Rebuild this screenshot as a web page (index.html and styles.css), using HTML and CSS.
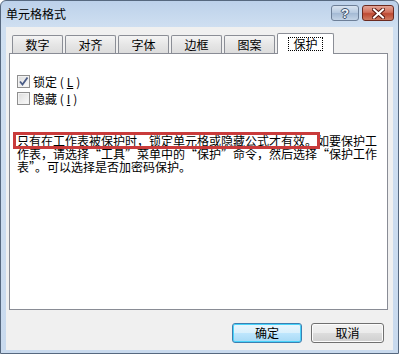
FILE: index.html
```html
<!DOCTYPE html>
<html lang="zh-CN">
<head>
<meta charset="utf-8">
<link rel="stylesheet" href="styles.css">
</head>
<body>
<div class="window">
  <div class="titlebar">
    <span class="title">单元格格式</span>
    <div class="caption-btns">
      <div class="cap help">?</div>
      <div class="cap close">
        <svg width="13" height="11" viewBox="0 0 13 11"><path d="M2 1.5 L11 9.5 M11 1.5 L2 9.5" stroke="#5a1a12" stroke-width="4" stroke-linecap="square"/><path d="M2 1.5 L11 9.5 M11 1.5 L2 9.5" stroke="#ffffff" stroke-width="2" stroke-linecap="square"/></svg>
      </div>
    </div>
  </div>
  <div class="body">
    <div class="tabs">
      <div class="tab">数字</div>
      <div class="tab">对齐</div>
      <div class="tab">字体</div>
      <div class="tab">边框</div>
      <div class="tab">图案</div>
      <div class="tab active"><span class="focus">保护</span></div>
    </div>
    <div class="panel">
      <div class="check"><span class="box"><svg width="11" height="11" viewBox="0 0 11 11"><path d="M2 5.5 L4.5 8.5 L9.5 1.5" fill="none" stroke="#4a5c86" stroke-width="1.8"/></svg></span>锁定 (<u>L</u>)</div>
      <div class="check"><span class="box"></span>隐藏 (<u>I</u>)</div>
      <p class="desc"><span class="hl">只有在工作表被保护时，锁定单元格或隐藏公式才有效。</span>如要保护工作表，请选择“工具”菜单中的“保护”命令，然后选择“保护工作表”。可以选择是否加密码保护。</p>
    </div>
    <div class="actions">
      <div class="btn default">确定</div>
      <div class="btn cancel">取消</div>
    </div>
  </div>
</div>
</body>
</html>
```

FILE: styles.css
```css
* { box-sizing: border-box; }
html, body { margin: 0; padding: 0; }
body {
  font-family: "Noto Sans CJK SC", "Liberation Sans", sans-serif;
  font-size: 12px;
  color: #000;
  background: #fff;
}
.window {
  width: 399px;
  height: 354px;
  border: 1px solid #56687f;
  border-radius: 6px 6px 0 0;
  background: linear-gradient(#bcd1ea 0px, #cfdff1 26px, #c9daee 100%);
  display: flex;
  flex-direction: column;
  overflow: hidden;
}
.titlebar {
  height: 26px;
  display: flex;
  align-items: center;
  padding-left: 5px;
  padding-right: 4px;
}
.title {
  flex: 1;
  line-height: 14px;
  color: #000;
}
.caption-btns {
  display: flex;
  gap: 3px;
  align-self: flex-start;
  margin-top: 4px;
}
.cap {
  height: 16px;
  border: 1px solid #6d7f98;
  border-radius: 3px;
  display: flex;
  align-items: center;
  justify-content: center;
}
.help {
  width: 28px;
  background: linear-gradient(#d9e4f1, #b5c8df 50%, #a3b9d4 51%, #c3d3e6);
  color: #f4f7fb;
  font-weight: bold;
  font-family: "Liberation Sans", sans-serif;
  font-size: 13px;
  text-shadow: 0 0 1px #40536d, 1px 0 0 #40536d, -1px 0 0 #40536d, 0 1px 0 #40536d, 0 -1px 0 #40536d;
}
.close {
  width: 32px;
  border-color: #6b2a20;
  background: linear-gradient(#e3a597, #d2705c 45%, #bd4a33 55%, #cf7b62);
}
.body {
  flex: 1;
  margin: 0 5px 3px 5px;
  background: #f0f0f0;
  display: flex;
  flex-direction: column;
}
.tabs {
  display: flex;
  align-items: flex-end;
  gap: 2px;
  margin-top: 6px;
  margin-left: 6px;
  height: 20px;
}
.tab {
  width: 51px;
  height: 18px;
  border: 1px solid #8b8e96;
  border-bottom: none;
  border-radius: 2px 2px 0 0;
  background: linear-gradient(#f4f4f4, #e6e6e6 50%, #dcdcdc);
  display: flex;
  align-items: center;
  justify-content: center;
  line-height: 14px;
}
.tab.active {
  width: 57px;
  height: 21px;
  margin-bottom: -1px;
  background: #fff;
  position: relative;
  z-index: 1;
}
.focus {
  border: 1px dotted #000;
  padding: 0 4px;
  line-height: 12px;
  height: 14px;
  display: flex;
  align-items: center;
}
.panel {
  margin-left: 3px;
  width: 379px;
  height: 257px;
  border: 1px solid #898c95;
  background: #fff;
  padding: 19px 0 0 7px;
}
.check {
  display: flex;
  align-items: center;
  gap: 3px;
  height: 17px;
  line-height: 13px;
}
.box {
  width: 13px;
  height: 13px;
  border: 1px solid #8f8f8f;
  background: linear-gradient(135deg, #dcdcdc, #fbfbfb);
  box-shadow: inset 0 0 0 1px #f2f2f2;
  display: flex;
  align-items: center;
  justify-content: center;
}
.check u { text-decoration-thickness: 1px; text-underline-offset: 1px; }
.desc {
  margin: 27px 0 0 0;
  width: 362px;
  line-height: 13px;
}
.hl {
  position: relative;
}
.hl::after {
  content: "";
  position: absolute;
  left: -4px;
  right: -3px;
  top: 0px;
  bottom: 0px;
  border: 3px solid #c93b3b;
}
.actions {
  display: flex;
  justify-content: flex-end;
  gap: 9px;
  margin-top: 13px;
  padding-right: 9px;
}
.btn {
  height: 20px;
  border: 1px solid #707070;
  border-radius: 3px;
  background: linear-gradient(#f2f2f2, #ebebeb 50%, #dddddd 51%, #cfcfcf);
  box-shadow: inset 0 0 0 1px #fcfcfc;
  display: flex;
  align-items: center;
  justify-content: center;
  line-height: 14px;
}
.default {
  width: 70px;
  border-color: #3c7fb1;
  box-shadow: inset 0 0 0 1px #48d3fa;
  background: linear-gradient(#eaf6fd, #d9f0fc 50%, #bee6fd 51%, #a7d9f5);
}
.cancel { width: 73px; }
```
